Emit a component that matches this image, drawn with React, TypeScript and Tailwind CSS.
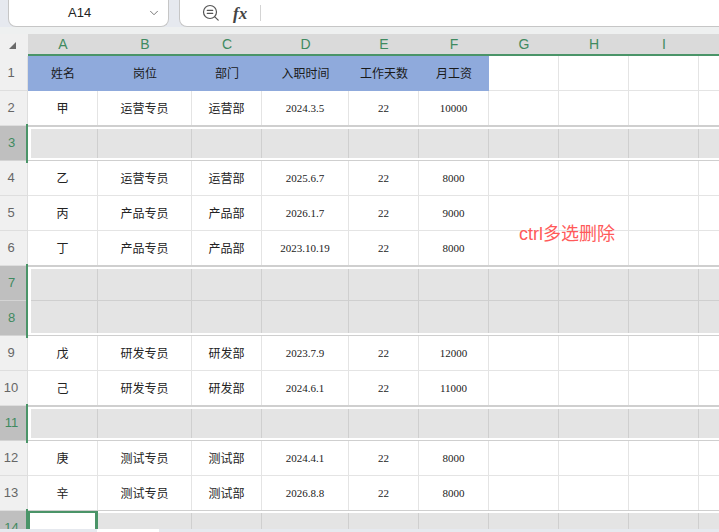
import { ChevronDown } from "lucide-react";

const SANS = "font-['Liberation_Sans','Noto_Sans_CJK_SC',sans-serif]";
const CELL_FONT = "font-['Liberation_Serif','Noto_Sans_CJK_SC',serif]";

const COLUMNS = [
  { label: "A", width: "w-[70px]" },
  { label: "B", width: "w-[94px]" },
  { label: "C", width: "w-[70px]" },
  { label: "D", width: "w-[87px]" },
  { label: "E", width: "w-[70px]" },
  { label: "F", width: "w-[70px]" },
  { label: "G", width: "w-[70px]" },
  { label: "H", width: "w-[70px]" },
  { label: "I", width: "w-[70px]" },
  { label: "", width: "w-[70px]" },
];

const HEADERS = ["姓名", "岗位", "部门", "入职时间", "工作天数", "月工资"];

const ROWS: Record<number, string[]> = {
  2: ["甲", "运营专员", "运营部", "2024.3.5", "22", "10000"],
  4: ["乙", "运营专员", "运营部", "2025.6.7", "22", "8000"],
  5: ["丙", "产品专员", "产品部", "2026.1.7", "22", "9000"],
  6: ["丁", "产品专员", "产品部", "2023.10.19", "22", "8000"],
  9: ["戊", "研发专员", "研发部", "2023.7.9", "22", "12000"],
  10: ["己", "研发专员", "研发部", "2024.6.1", "22", "11000"],
  12: ["庚", "测试专员", "测试部", "2024.4.1", "22", "8000"],
  13: ["辛", "测试专员", "测试部", "2026.8.8", "22", "8000"],
};

function RowHeader({ n, selected }: { n: number; selected?: boolean }) {
  return (
    <div
      className={`relative w-[28px] shrink-0 h-[35px] flex items-center justify-center pr-[5px] text-[13px] ${SANS} ${
        selected
          ? "bg-[#bfbfbf] text-[#3f8a60] border-b border-[#d4d4d4]"
          : "bg-[#f0f0f0] text-[#666666] border-b border-r border-[#dedede]"
      }`}
    >
      {n}
    </div>
  );
}

function DataRow({ n }: { n: number }) {
  const values = ROWS[n];
  return (
    <div className="flex h-[35px]">
      <RowHeader n={n} />
      {COLUMNS.map((col, i) => (
        <div
          key={col.label}
          className={`${col.width} shrink-0 h-full flex items-center justify-center border-r border-b border-[#e4e4e4] text-[#222222] ${CELL_FONT} ${
            i >= 3 && i <= 5 ? "text-[11px]" : "text-[12px] pt-[2px]"
          }`}
        >
          {values?.[i]}
        </div>
      ))}
    </div>
  );
}

function TitleRow() {
  return (
    <div className="flex h-[35px]">
      <RowHeader n={1} />
      {COLUMNS.map((col, i) =>
        i < 6 ? (
          <div
            key={col.label}
            className={`${col.width} shrink-0 h-full flex items-center justify-center bg-[#8faadc] text-[12px] text-[#1a1a1a] ${CELL_FONT}`}
          >
            {HEADERS[i]}
          </div>
        ) : (
          <div key={col.label} className={`${col.width} shrink-0 h-full border-r border-b border-[#e4e4e4]`} />
        )
      )}
    </div>
  );
}

// 选中的整行：外面灰线，里面一圈白边
function SelectedRows({ rows }: { rows: number[] }) {
  return (
    <div className="relative z-10 flex">
      <div className="relative flex flex-col">
        {rows.map((n) => (
          <RowHeader key={n} n={n} selected />
        ))}
        <div className="absolute right-0 top-[-2px] bottom-[-2px] w-[2px] bg-[#4a9468]" />
      </div>
      <div className="flex-1 bg-white pt-[2px] pb-[2px] pl-[3px] border-y border-[#cfcfcf] shadow-[0_-1px_0_#cfcfcf]">
        {rows.map((n, r) => (
          <div
            key={n}
            className={`flex ${rows.length === 1 ? "h-[29px]" : "h-[32px]"} ${
              r < rows.length - 1 ? "border-b border-[#cfcfcf]" : ""
            } bg-[#e4e4e4]`}
          >
            {COLUMNS.map((col, i) => (
              <div
                key={col.label}
                className={`${i === 0 ? "w-[67px]" : col.width} shrink-0 h-full border-r border-[#cfcfcf]`}
              />
            ))}
          </div>
        ))}
      </div>
    </div>
  );
}

function ActiveRow() {
  return (
    <div className="relative z-10 flex">
      <div className="relative">
        <RowHeader n={14} selected />
        <div className="absolute right-0 top-[-2px] bottom-0 w-[2px] bg-[#4a9468]" />
      </div>
      <div className="flex-1 flex h-[35px] bg-white shadow-[0_-1px_0_#cfcfcf]">
        <div className="w-[70px] shrink-0 h-full bg-white border-2 border-r-[3px] border-[#4a9468]" />
        <div className="flex-1 h-full pt-[2px] bg-white">
          <div className="flex h-full bg-[#e4e4e4]">
            {COLUMNS.slice(1).map((col) => (
              <div key={col.label} className={`${col.width} shrink-0 h-full border-r border-[#cfcfcf]`} />
            ))}
          </div>
        </div>
      </div>
    </div>
  );
}

export default function App() {
  return (
    <div className={`relative w-[719px] h-[532px] overflow-hidden flex flex-col bg-white ${SANS}`}>
      {/* 顶部名称框和公式栏 */}
      <div className="h-[34px] shrink-0 bg-[#eef0f0]">
        <div className="flex h-[27px] gap-[10px] pl-[8px] bg-[#e6e9ef]">
          <div className="w-[161px] flex items-center bg-white rounded-b-lg border-b border-x border-[#c6c6c6]">
            <span className="ml-[59px] text-[13px] text-[#222222]">A14</span>
            <ChevronDown className="ml-auto mr-[7px] w-[14px] h-[14px] text-[#666666]" strokeWidth={1.5} />
          </div>
          <div className="flex-1 flex items-center bg-white rounded-bl-lg border-b border-l border-[#c6c6c6]">
            <svg className="ml-[22px] w-[18px] h-[18px]" viewBox="0 0 18 18" fill="none" stroke="#555555" strokeWidth="1.2">
              <circle cx="8" cy="8" r="6.5" />
              <path d="M5.3 6.4h5.4M5.3 9.4h5.4M12.8 12.8l3.4 3.4" strokeLinecap="round" />
            </svg>
            <span className="ml-[13px] font-['Liberation_Serif',serif] italic font-bold text-[17px] leading-none text-[#444444]">
              fx
            </span>
            <div className="ml-[13px] w-px h-[16px] bg-[#d4d4d4]" />
          </div>
        </div>
      </div>

      {/* 列标题 */}
      <div className="flex h-[22px] shrink-0">
        <div className="w-[28px] shrink-0 bg-[#f0f0f0] flex items-center justify-center pr-[4px]">
          <svg className="w-[7px] h-[7px]" viewBox="0 0 7 7">
            <path d="M7 0V7H0Z" fill="#6a6a6a" />
          </svg>
        </div>
        <div className="flex flex-1 bg-[#dadada] border-b-2 border-[#4a9468]">
          {COLUMNS.map((col) => (
            <div
              key={col.label || "J"}
              className={`${col.width} shrink-0 flex items-center justify-center text-[14px] text-[#3f8a60]`}
            >
              {col.label}
            </div>
          ))}
        </div>
      </div>

      {/* 表格 */}
      <div className="flex-1 min-h-0 overflow-hidden">
        <TitleRow />
        <DataRow n={2} />
        <SelectedRows rows={[3]} />
        <DataRow n={4} />
        <DataRow n={5} />
        <DataRow n={6} />
        <SelectedRows rows={[7, 8]} />
        <DataRow n={9} />
        <DataRow n={10} />
        <SelectedRows rows={[11]} />
        <DataRow n={12} />
        <DataRow n={13} />
        <ActiveRow />
      </div>

      {/* 底部标签栏露出的一点 */}
      <div className="flex h-[3px] shrink-0 bg-[#e6e9ef]">
        <div className="ml-[97px] w-[62px] bg-white" />
      </div>

      {/* 浮在表格上的文本框 */}
      <div className="absolute left-[519px] top-[223px] z-20 text-[18px] leading-[22px] text-[#ff5a5a]">
        ctrl多选删除
      </div>
    </div>
  );
}
